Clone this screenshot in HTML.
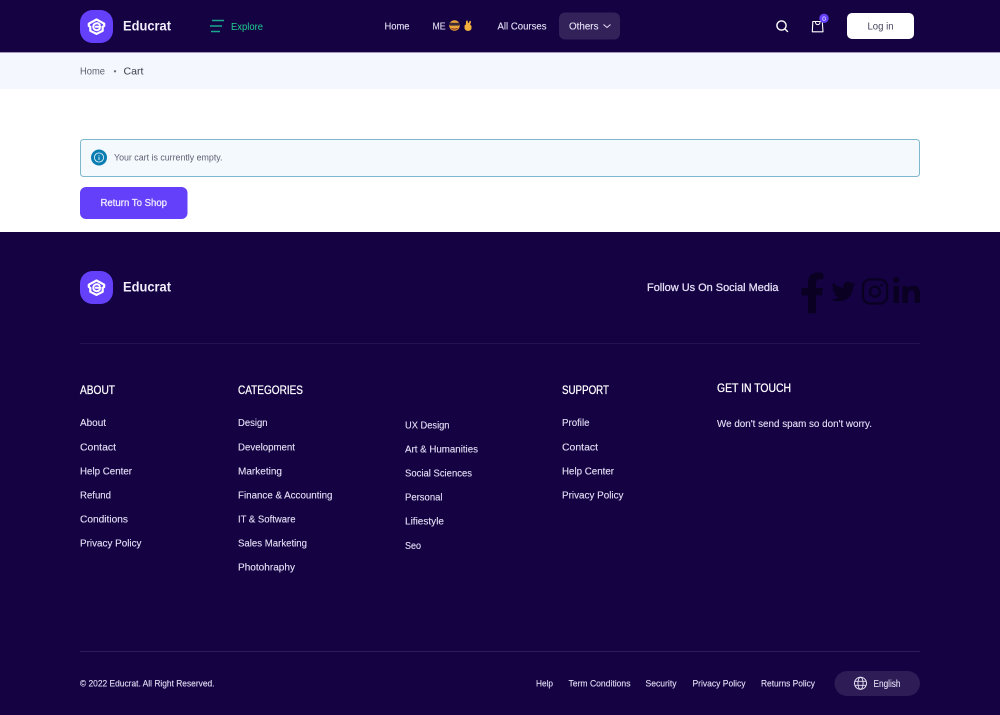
<!DOCTYPE html>
<html><head><meta charset="utf-8"><title>Educrat</title>
<style>
html,body{margin:0;padding:0;background:#fff;width:1000px;height:715px;overflow:hidden}
svg{display:block;position:absolute;left:0;top:0}
text{font-family:"Liberation Sans","DejaVu Sans",sans-serif;font-size:10.5px;fill:#f1edfb}
.t{font-size:10.5px;fill:#e6e1f6;stroke:#e6e1f6;stroke-width:.1px}
.h{font-size:11.5px;fill:#fff;stroke:#fff;stroke-width:.25px}
.b{font-weight:bold}
</style></head><body>
<svg width="1000" height="715" viewBox="0 0 1000 715" xmlns="http://www.w3.org/2000/svg">
<defs>
<g id="logo">
<rect width="33" height="33" rx="12.500" fill="#6440fb"/>
<path d="M16.500 9.500 24.200 13.700 24.200 15.900 22.700 16.800 22.700 20.800 16.500 23.900 10.300 20.800 10.300 16.800 8.800 15.900 8.800 13.700Z" fill="none" stroke="#fff" stroke-width="2.200" stroke-linejoin="round"/>
<path d="M19.800 14.900A3.500 3.500 0 1 0 19.800 18.500M15.800 16.700H20.300" fill="none" stroke="#fff" stroke-width="2" stroke-linecap="round"/>
</g>
</defs>
<rect width="1000" height="52" fill="#140243"/>
<rect y="52" width="1000" height="1" fill="#a596bd"/>
<rect y="53" width="1000" height="36" fill="#f5f7fe"/>
<rect y="89" width="1000" height="143" fill="#fff"/>
<rect y="232" width="1000" height="483" fill="#140243"/>

<use href="#logo" x="80" y="10"/>
<text x="123" y="30.500" class="b" style="font-size:13.500px" textLength="48" lengthAdjust="spacingAndGlyphs" fill="#fff">Educrat</text>
<path d="M212 20.500H224M210 26H222M211 31.500H220" stroke="#1aa78f" stroke-width="1.500" fill="none"/>
<text x="231" y="29.800" textLength="32" lengthAdjust="spacingAndGlyphs" style="fill:#1fd08f">Explore</text>

<text class="t" x="384.500" y="29.500" textLength="25" lengthAdjust="spacingAndGlyphs">Home</text>
<text class="t" x="432.500" y="29.500" textLength="13" lengthAdjust="spacingAndGlyphs">ME</text>
<circle cx="454.500" cy="25.500" r="5.300" fill="#eda53a"/>
<rect x="449.200" y="22.800" width="10.600" height="2.800" rx="1.200" fill="#3a2a3a"/>
<path d="M451.500 28.200c1.800 1.200 4.200 1.200 6 0" stroke="#8a3b26" stroke-width="1.100" fill="none"/>
<path d="M464.500 25.500l1.300-1 .4-3.800 1.400-.2.500 3 1.800-2.800 1.200.7-.9 3.300 1.300 1.200v2c0 1.900-1.300 3-3.300 3s-3.700-1.300-3.700-3.200z" fill="#f2b13c"/>
<text class="t" x="497.500" y="29.500" textLength="49" lengthAdjust="spacingAndGlyphs">All Courses</text>
<rect x="559" y="12.500" width="61" height="27" rx="6" fill="#332259"/>
<text class="t" x="569" y="29.500" textLength="29.500" lengthAdjust="spacingAndGlyphs">Others</text>
<path d="M603.500 24.500 607 27.500 610.500 24.500" stroke="#e6e1f6" stroke-width="1" fill="none"/>

<circle cx="781.500" cy="25.500" r="4.600" fill="none" stroke="#fff" stroke-width="1.400"/>
<path d="M785 29 787.500 31.500" stroke="#fff" stroke-width="1.400" stroke-linecap="round"/>
<path d="M812.800 21.500H822.300L823 31.800H812.300Z" fill="none" stroke="#fff" stroke-width="1.100" stroke-linejoin="round"/>
<path d="M815.500 22C815.500 25.500 820 25.500 820 22" fill="none" stroke="#fff" stroke-width="1"/>
<circle cx="824" cy="18.300" r="4.700" fill="#6440fb"/>
<text x="822.200" y="20.800" style="font-size:6.500px;fill:#fff">0</text>
<rect x="847" y="13" width="67" height="26" rx="5" fill="#fff"/>
<text x="867.500" y="29.500" textLength="26" lengthAdjust="spacingAndGlyphs" style="fill:#44435c">Log in</text>

<text x="80" y="74.500" textLength="25" lengthAdjust="spacingAndGlyphs" style="fill:#60606f">Home</text>
<circle cx="115" cy="71.300" r="1.200" fill="#70707f"/>
<text x="123.500" y="74.500" textLength="20" lengthAdjust="spacingAndGlyphs" style="fill:#40404f">Cart</text>

<rect x="80.500" y="139.500" width="839" height="37" rx="3" fill="#f4f9fe" stroke="#7fb7cc"/>
<circle cx="99" cy="157.500" r="8" fill="#0b7db1"/>
<circle cx="99" cy="157.500" r="4.600" fill="none" stroke="#d8eef7" stroke-width=".9"/>
<path d="M99 156.800V160M99 155V155.800" stroke="#d8eef7" stroke-width="1"/>
<text x="114" y="160.500" textLength="108.500" lengthAdjust="spacingAndGlyphs" style="font-size:9px;fill:#5f6072">Your cart is currently empty.</text>

<rect x="80" y="187" width="107.500" height="32" rx="6" fill="#6440fb"/>
<text x="100.500" y="206" textLength="66.500" lengthAdjust="spacingAndGlyphs" style="font-size:10px;fill:#efeaff;stroke:#efeaff;stroke-width:.3px">Return To Shop</text>

<use href="#logo" x="80" y="271"/>
<text x="123" y="291.500" class="b" style="font-size:13.500px" textLength="48" lengthAdjust="spacingAndGlyphs" fill="#fff">Educrat</text>
<text class="t" x="647" y="291" textLength="131.500" lengthAdjust="spacingAndGlyphs" style="font-size:11px;stroke-width:.25px">Follow Us On Social Media</text>

<g fill="#0a0022">
<path transform="translate(799.700 272.500) scale(.0795)" d="M279.140 288l14.220-92.660h-88.910v-60.130c0-25.350 12.420-50.060 52.240-50.060h40.420V6.260S260.430 0 225.360 0c-73.220 0-121.080 44.380-121.080 124.720v70.620H22.890V288h81.390v224h100.170V288z"/>
<path transform="translate(831.500 279.500) scale(.0470)" d="M459.370 151.716c.325 4.548.325 9.097.325 13.645 0 138.720-105.583 298.558-298.558 298.558-59.452 0-114.680-17.219-161.137-47.106 8.447.974 16.568 1.299 25.340 1.299 49.055 0 94.213-16.568 130.274-44.832-46.132-.975-84.792-31.188-98.112-72.772 6.498.974 12.995 1.624 19.818 1.624 9.421 0 18.843-1.300 27.614-3.573-48.081-9.747-84.143-51.980-84.143-102.985v-1.299c13.969 7.797 30.214 12.670 47.431 13.319-28.264-18.843-46.781-51.005-46.781-87.391 0-19.492 5.197-37.360 14.294-52.954 51.655 63.675 129.300 105.258 216.365 109.807-1.624-7.797-2.599-15.918-2.599-24.040 0-57.828 46.782-104.934 104.934-104.934 30.213 0 57.502 12.670 76.670 33.137 23.715-4.548 46.456-13.320 66.599-25.340-7.798 24.366-24.366 44.833-46.132 57.827 21.117-2.273 41.584-8.122 60.426-16.243-14.292 20.791-32.161 39.308-52.628 54.253z"/>
<rect x="863" y="279.500" width="24" height="24" rx="7" fill="none" stroke="#0a0022" stroke-width="2.300"/>
<circle cx="875" cy="291.500" r="5" fill="none" stroke="#0a0022" stroke-width="2.300"/>
<circle cx="881.500" cy="285" r="1.300"/>
<rect x="893.500" y="286" width="5.500" height="17"/>
<circle cx="896.200" cy="280" r="3.100"/>
<path d="M902.500 286H907.700V288.500C909 286.600 910.800 285.600 913.300 285.600 918 285.600 920 288.500 920 293.500V303H914.500V294.500C914.500 292 913.700 290.500 911.500 290.500 909.200 290.500 908 292 908 294.500V303H902.500Z"/>
</g>

<rect x="80" y="343" width="840" height="1" fill="#231350"/>
<rect x="80" y="651" width="840" height="1" fill="#2a1a58"/>

<text class="h" x="80" y="394" textLength="35" lengthAdjust="spacingAndGlyphs">ABOUT</text>
<text class="h" x="238" y="394" textLength="65" lengthAdjust="spacingAndGlyphs">CATEGORIES</text>
<text class="h" x="562" y="394" textLength="47" lengthAdjust="spacingAndGlyphs">SUPPORT</text>
<text class="h" x="717" y="392" textLength="74" lengthAdjust="spacingAndGlyphs">GET IN TOUCH</text>

<g>
<text class="t" x="80" y="426" textLength="26" lengthAdjust="spacingAndGlyphs">About</text>
<text class="t" x="80" y="450.500" textLength="36" lengthAdjust="spacingAndGlyphs">Contact</text>
<text class="t" x="80" y="474.500" textLength="52" lengthAdjust="spacingAndGlyphs">Help Center</text>
<text class="t" x="80" y="498.500" textLength="31" lengthAdjust="spacingAndGlyphs">Refund</text>
<text class="t" x="80" y="522.500" textLength="48" lengthAdjust="spacingAndGlyphs">Conditions</text>
<text class="t" x="80" y="546.500" textLength="61.500" lengthAdjust="spacingAndGlyphs">Privacy Policy</text>

<text class="t" x="238" y="426" textLength="29.500" lengthAdjust="spacingAndGlyphs">Design</text>
<text class="t" x="238" y="450.500" textLength="57" lengthAdjust="spacingAndGlyphs">Development</text>
<text class="t" x="238" y="474.500" textLength="44" lengthAdjust="spacingAndGlyphs">Marketing</text>
<text class="t" x="238" y="498.500" textLength="94.500" lengthAdjust="spacingAndGlyphs">Finance &amp; Accounting</text>
<text class="t" x="238" y="522.500" textLength="57.500" lengthAdjust="spacingAndGlyphs">IT &amp; Software</text>
<text class="t" x="238" y="546.500" textLength="69" lengthAdjust="spacingAndGlyphs">Sales Marketing</text>
<text class="t" x="238" y="570.500" textLength="57" lengthAdjust="spacingAndGlyphs">Photohraphy</text>

<text class="t" x="405" y="428.500" textLength="44.500" lengthAdjust="spacingAndGlyphs">UX Design</text>
<text class="t" x="405" y="452.500" textLength="73" lengthAdjust="spacingAndGlyphs">Art &amp; Humanities</text>
<text class="t" x="405" y="476.500" textLength="67" lengthAdjust="spacingAndGlyphs">Social Sciences</text>
<text class="t" x="405" y="500.500" textLength="37.500" lengthAdjust="spacingAndGlyphs">Personal</text>
<text class="t" x="405" y="524.500" textLength="39" lengthAdjust="spacingAndGlyphs">Lifiestyle</text>
<text class="t" x="405" y="549" textLength="16" lengthAdjust="spacingAndGlyphs">Seo</text>

<text class="t" x="562" y="426" textLength="27.500" lengthAdjust="spacingAndGlyphs">Profile</text>
<text class="t" x="562" y="450.500" textLength="36" lengthAdjust="spacingAndGlyphs">Contact</text>
<text class="t" x="562" y="474.500" textLength="52" lengthAdjust="spacingAndGlyphs">Help Center</text>
<text class="t" x="562" y="498.500" textLength="61.500" lengthAdjust="spacingAndGlyphs">Privacy Policy</text>

<text class="t" x="717" y="427" textLength="155" lengthAdjust="spacingAndGlyphs">We don't send spam so don't worry.</text>

<text class="t" x="80" y="686.500" textLength="134.500" lengthAdjust="spacingAndGlyphs" style="font-size:9.500px">© 2022 Educrat. All Right Reserved.</text>
<text class="t" x="536" y="686.500" textLength="17" lengthAdjust="spacingAndGlyphs" style="font-size:9.500px">Help</text>
<text class="t" x="568.500" y="686.500" textLength="62" lengthAdjust="spacingAndGlyphs" style="font-size:9.500px">Term Conditions</text>
<text class="t" x="645.500" y="686.500" textLength="31" lengthAdjust="spacingAndGlyphs" style="font-size:9.500px">Security</text>
<text class="t" x="692.500" y="686.500" textLength="53" lengthAdjust="spacingAndGlyphs" style="font-size:9.500px">Privacy Policy</text>
<text class="t" x="761" y="686.500" textLength="54" lengthAdjust="spacingAndGlyphs" style="font-size:9.500px">Returns Policy</text>
</g>

<rect x="834.500" y="671" width="85.500" height="25" rx="12.500" fill="#2d1c55"/>
<circle cx="860.500" cy="683.300" r="6" fill="none" stroke="#e8e4f5" stroke-width="1"/>
<ellipse cx="860.500" cy="683.300" rx="2.600" ry="6" fill="none" stroke="#e8e4f5" stroke-width=".9"/>
<path d="M855 681.300H866M855 685.300H866" stroke="#e8e4f5" stroke-width=".9"/>
<text class="t" x="873.500" y="686.800" textLength="27" lengthAdjust="spacingAndGlyphs" style="font-size:10px">English</text>
</svg>
</body></html>
